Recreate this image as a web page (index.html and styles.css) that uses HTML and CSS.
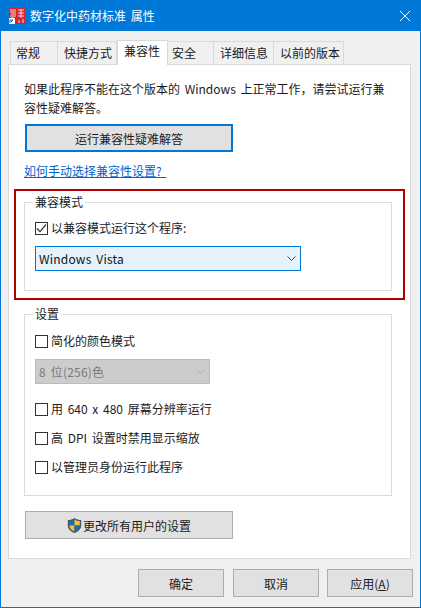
FILE: index.html
```html
<!DOCTYPE html>
<html lang="zh">
<head>
<meta charset="utf-8">
<title>数字化中药材标准 属性</title>
<link rel="stylesheet" href="styles.css">
</head>
<body>
<div class="window">
  <header class="titlebar">
    <svg class="app-icon" width="16" height="16" viewBox="0 0 16 16">
      <rect width="16" height="16" fill="#d8232c"/>
      <path d="M1 2h6M1 4h6M2 6h5M1 8h6M2 10h3M9 2h6M9 5h6M12 1v9M9 8h6M10 12v3M14 11v4" stroke="#f6d9d6" stroke-width="1" fill="none"/>
      <rect y="10" width="6" height="6" fill="#fff"/>
      <path d="M1 15v-3h3M2 14l2-2" stroke="#2a5a9a" stroke-width="1" fill="none"/>
    </svg>
    <span class="title">数字化中药材标准 属性</span>
    <svg class="close" width="12" height="12" viewBox="0 0 12 12">
      <path d="M1 1l10 10M11 1L1 11" stroke="#fff" stroke-width="1" fill="none"/>
    </svg>
  </header>
  <div class="content">
    <nav class="tabs">
      <span class="tab t1">常规</span>
      <span class="tab t2">快捷方式</span>
      <span class="tab t3 active">兼容性</span>
      <span class="tab t4">安全</span>
      <span class="tab t5">详细信息</span>
      <span class="tab t6">以前的版本</span>
    </nav>
    <main class="panel">
      <p class="intro">如果此程序不能在这个版本的 Windows 上正常工作，请尝试运行兼容性疑难解答。</p>
      <button class="btn wide focused">运行兼容性疑难解答</button>
      <a class="link" href="#">如何手动选择兼容性设置?&nbsp;</a>
      <div class="highlighted">
        <section class="group mode">
          <span class="legend">兼容模式</span>
          <label class="check">
            <span class="box">
              <svg width="11" height="11" viewBox="0 0 11 11"><path d="M1 5.500l3 3.200 6-7.200" stroke="#333" stroke-width="1.200" fill="none"/></svg>
            </span>以兼容模式运行这个程序:
          </label>
          <div class="combo open">
            <span>Windows Vista</span>
            <svg width="9" height="5" viewBox="0 0 9 5"><path d="M.5.5l4 4 4-4" stroke="#444" stroke-width="1" fill="none"/></svg>
          </div>
        </section>
        <div class="red-frame"></div>
      </div>
      <section class="group settings">
        <span class="legend">设置</span>
        <label class="check"><span class="box"></span>简化的颜色模式</label>
        <div class="combo disabled">
          <span>8 位(256)色</span>
          <svg width="9" height="5" viewBox="0 0 9 5"><path d="M.5.5l4 4 4-4" stroke="#b0b0b0" stroke-width="1" fill="none"/></svg>
        </div>
        <label class="check s1"><span class="box"></span>用 640 x 480 屏幕分辨率运行</label>
        <label class="check s2"><span class="box"></span>高 DPI 设置时禁用显示缩放</label>
        <label class="check s3"><span class="box"></span>以管理员身份运行此程序</label>
      </section>
      <button class="btn wide shield-btn">
        <svg width="15" height="17" viewBox="0 0 15 16">
          <path d="M7.500.5C5.500 2 3 2.500.8 2.500v5.500c0 3.500 3 6.200 6.700 7.500 3.700-1.300 6.700-4 6.700-7.500V2.500C12 2.500 9.500 2 7.500.5z" fill="#4a5560"/>
          <path d="M7.500 2C6 3 4 3.500 2.200 3.600V8h5.300z" fill="#0f6fc6"/>
          <path d="M7.500 2c1.500 1 3.500 1.500 5.300 1.600V8H7.500z" fill="#f5c12e"/>
          <path d="M2.200 8h5.300v6C5 13 2.500 11 2.200 8z" fill="#f5c12e"/>
          <path d="M12.800 8H7.500v6c2.500-1 5-3 5.300-6z" fill="#0f6fc6"/>
        </svg>更改所有用户的设置
      </button>
    </main>
    <footer class="actions">
      <button class="btn action first">确定</button>
      <button class="btn action">取消</button>
      <button class="btn action">应用(<u>A</u>)</button>
    </footer>
  </div>
</div>
</body>
</html>
```
FILE: styles.css
```css
* { box-sizing: border-box; }
html, body { margin: 0; padding: 0; }
body {
  width: 421px;
  height: 608px;
  overflow: hidden;
  font-family: "Noto Sans CJK SC", "Liberation Sans", sans-serif;
  font-size: 12px;
  word-spacing: 2px;
  color: #1a1a1a;
}
.window {
  width: 421px;
  height: 608px;
  border: 1px solid #0078d7;
  border-top: 0;
  background: #f0f0f0;
  display: flex;
  flex-direction: column;
}
.titlebar {
  height: 31px;
  flex: none;
  margin: 0 -1px;
  padding: 0 10px 0 9px;
  background: #0078d7;
  color: #fff;
  display: flex;
  align-items: center;
}
.app-icon { margin-right: 5px; flex: none; }
.title { flex: 1; line-height: 31px; }
.close { flex: none; }
.content { flex: 1; padding: 9px 7px 0; display: flex; flex-direction: column; }
.tabs { display: flex; height: 24px; padding-left: 2px; align-items: flex-end; }
.tab {
  height: 23px;
  border: 1px solid #d9d9d9;
  border-bottom: 0;
  border-left-width: 0;
  background: #f0f0f0;
  line-height: 21px;
  padding-left: 6px;
  white-space: nowrap;
}
.t1 { width: 48px; border-left-width: 1px; padding-left: 5px; }
.t2 { width: 59px; }
.t3 { width: 51px; }
.t4 { width: 46px; padding-left: 4px; }
.t5 { width: 60px; }
.t6 { width: 70px; }
.tab.active {
  height: 25px;
  margin-bottom: -1px;
  background: #fff;
  line-height: 20px;
  position: relative;
  z-index: 1;
  border-left-width: 1px;
}
.panel {
  width: 403px;
  height: 495px;
  border: 1px solid #d9d9d9;
  background: #fff;
  padding: 14px 15px 0;
}
.intro { margin: 0; width: 366px; line-height: 19px; }
.btn {
  display: flex;
  align-items: center;
  justify-content: center;
  font: inherit;
  word-spacing: inherit;
  color: inherit;
  background: #e1e1e1;
  border: 1px solid #adadad;
  padding: 0;
}
.wide { width: 208px; height: 28px; margin-left: 1px; }
.focused { border: 2px solid #0078d7; margin-top: 7px; }
.link {
  display: block;
  width: max-content;
  margin-top: 10px;
  line-height: 18px;
  color: #0066cc;
  text-decoration: underline;
}
.highlighted { position: relative; margin-top: 22px; }
.red-frame {
  position: absolute;
  left: -10px;
  top: -13px;
  width: 391px;
  height: 111px;
  border: 2px solid #b00000;
  pointer-events: none;
}
.group {
  width: 368px;
  border: 1px solid #dcdcdc;
  padding: 0 10px;
  display: flex;
  flex-direction: column;
  align-items: flex-start;
}
.legend {
  height: 16px;
  line-height: 16px;
  margin: -9px 0 0 -2px;
  padding: 0 2px;
  background: #fff;
}
.mode { height: 89px; }
.mode .check { margin-top: 10px; }
.check { display: flex; align-items: center; height: 16px; line-height: 16px; white-space: nowrap; }
.box {
  width: 13px;
  height: 13px;
  flex: none;
  margin-right: 3px;
  border: 1px solid #333;
  background: #fff;
  display: flex;
  align-items: center;
  justify-content: center;
}
.combo {
  height: 25px;
  display: flex;
  align-items: center;
  justify-content: space-between;
  padding: 0 4px 0 3px;
  letter-spacing: .2px;
}
.open {
  width: 266px;
  margin-top: 10px;
  border: 1px solid #0078d7;
  background: #e5f1fb;
  color: #111;
}
.disabled {
  width: 175px;
  margin-top: 10px;
  border: 1px solid #bcbcbc;
  background: #cccccc;
  color: #7a7a7a;
}
.settings { height: 182px; margin-top: 23px; }
.settings > .check:first-of-type { margin-top: 11px; }
.s1 { margin-top: 17px; }
.s2 { margin-top: 13px; }
.s3 { margin-top: 13px; }
.shield-btn { margin-top: 15px; }
.shield-btn svg { margin-right: 1px; }
.actions {
  display: flex;
  justify-content: flex-end;
  gap: 8px;
  margin-top: 10px;
}
.action { width: 86px; height: 28px; }
.first { margin-right: 1px; }
```
